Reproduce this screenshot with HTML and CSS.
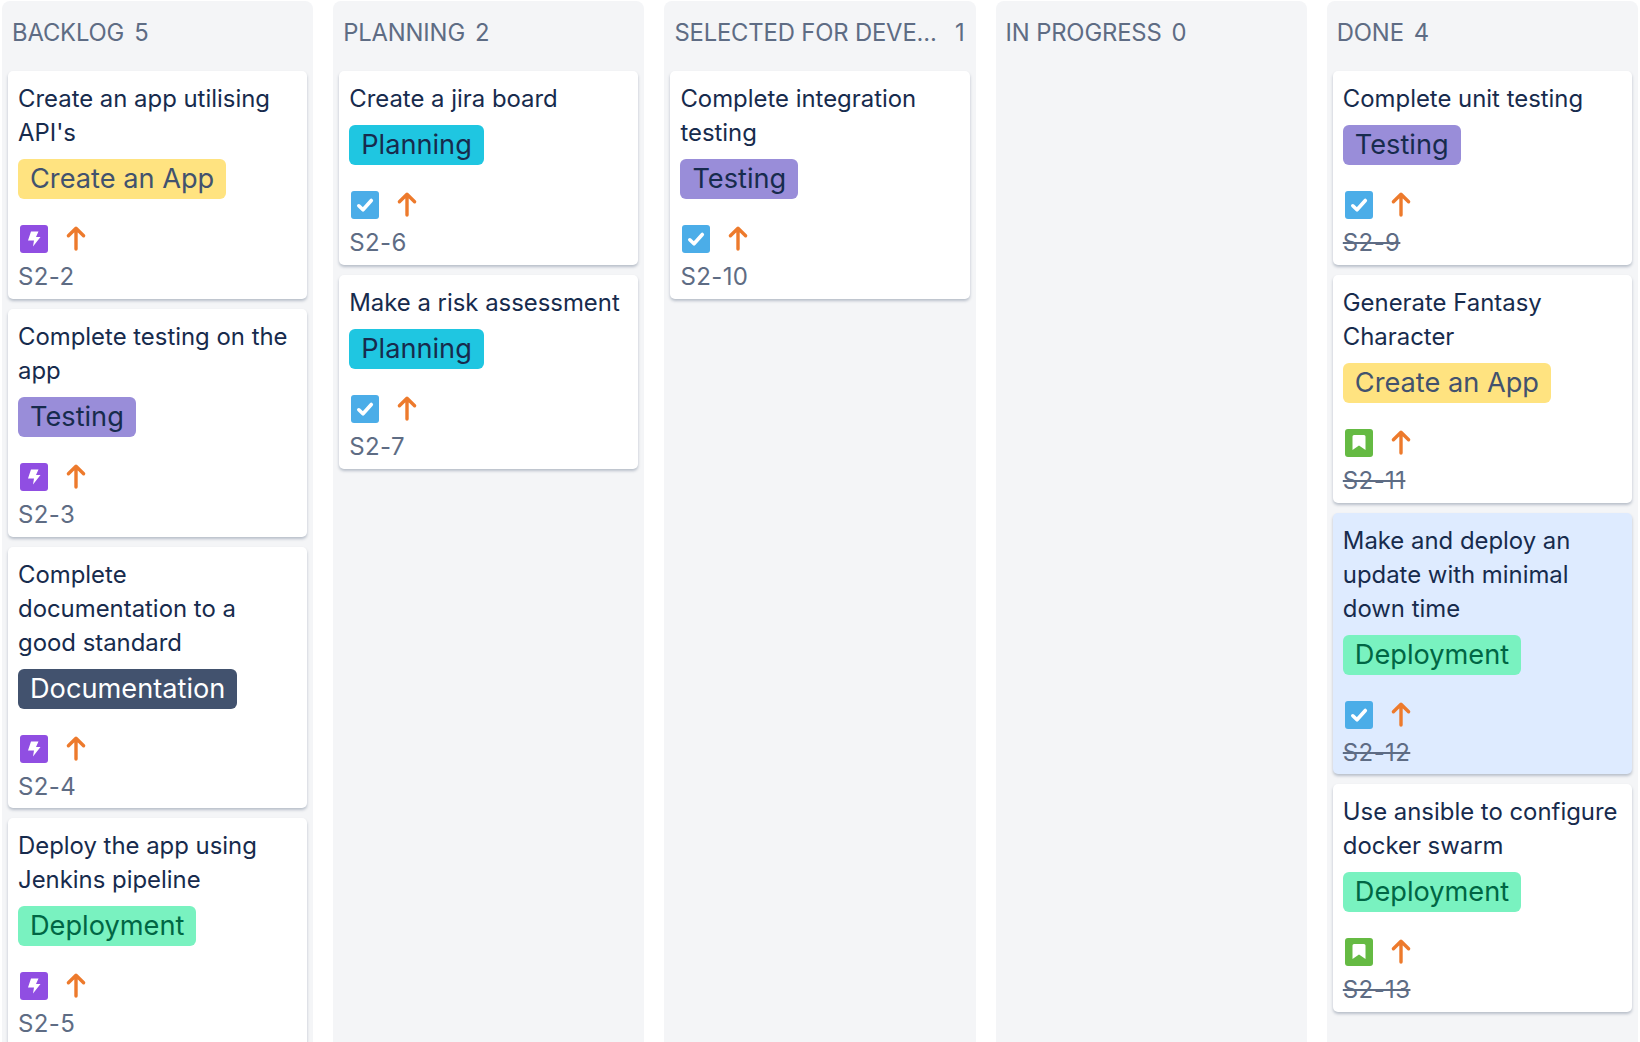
FILE: index.html
```html
<!DOCTYPE html>
<html lang="en">
<head>
    <meta charset="UTF-8">
    <title>Board</title>
    <link rel="stylesheet" href="styles.css">
</head>
<body>
    <svg class="defs" width="0" height="0">
        <symbol id="epic" viewBox="0 0 28 28">
            <rect width="28" height="28" rx="3" fill="#904ee2"/>
            <path d="M11 6.500h7.500L16 12h4.500L13 21.500l1-6H8z" fill="#fff"/>
        </symbol>
        <symbol id="task" viewBox="0 0 28 28">
            <rect width="28" height="28" rx="3" fill="#4bade8"/>
            <path d="M7.800 14.800 12 18.800 20.300 9.500" fill="none" stroke="#fff" stroke-width="3.600" stroke-linecap="round" stroke-linejoin="round"/>
        </symbol>
        <symbol id="story" viewBox="0 0 28 28">
            <rect width="28" height="28" rx="3" fill="#65ba43"/>
            <path d="M7.500 7.500A1.500 1.500 0 0 1 9 6h10a1.500 1.500 0 0 1 1.500 1.500V21L14 16.500 7.500 21z" fill="#fff"/>
        </symbol>
        <symbol id="high" viewBox="0 0 28 28">
            <path d="M14 24V4M6.400 10.800 14 3.300l7.600 7.500" fill="none" stroke="#ed7a2c" stroke-width="3.400" stroke-linecap="round" stroke-linejoin="round"/>
        </symbol>
    </svg>

    <div class="board">
        <section class="column">
            <h2 class="column-head"><span class="column-name">BACKLOG</span><span class="column-count">5</span></h2>
            <article class="card">
                <p class="card-title">Create an app utilising API's</p>
                <span class="tag tag-app">Create an App</span>
                <div class="card-icons"><svg class="icon"><use href="#epic"/></svg><svg class="icon"><use href="#high"/></svg></div>
                <span class="card-key">S2-2</span>
            </article>
            <article class="card">
                <p class="card-title">Complete testing on the app</p>
                <span class="tag tag-testing">Testing</span>
                <div class="card-icons"><svg class="icon"><use href="#epic"/></svg><svg class="icon"><use href="#high"/></svg></div>
                <span class="card-key">S2-3</span>
            </article>
            <article class="card">
                <p class="card-title">Complete documentation to a good standard</p>
                <span class="tag tag-docs">Documentation</span>
                <div class="card-icons"><svg class="icon"><use href="#epic"/></svg><svg class="icon"><use href="#high"/></svg></div>
                <span class="card-key">S2-4</span>
            </article>
            <article class="card">
                <p class="card-title">Deploy the app using Jenkins pipeline</p>
                <span class="tag tag-deploy">Deployment</span>
                <div class="card-icons"><svg class="icon"><use href="#epic"/></svg><svg class="icon"><use href="#high"/></svg></div>
                <span class="card-key">S2-5</span>
            </article>
        </section>

        <section class="column">
            <h2 class="column-head"><span class="column-name">PLANNING</span><span class="column-count">2</span></h2>
            <article class="card">
                <p class="card-title">Create a jira board</p>
                <span class="tag tag-planning">Planning</span>
                <div class="card-icons"><svg class="icon"><use href="#task"/></svg><svg class="icon"><use href="#high"/></svg></div>
                <span class="card-key">S2-6</span>
            </article>
            <article class="card">
                <p class="card-title">Make a risk assessment</p>
                <span class="tag tag-planning">Planning</span>
                <div class="card-icons"><svg class="icon"><use href="#task"/></svg><svg class="icon"><use href="#high"/></svg></div>
                <span class="card-key">S2-7</span>
            </article>
        </section>

        <section class="column">
            <h2 class="column-head"><span class="column-name">SELECTED FOR DEVE...</span><span class="column-count column-count-right">1</span></h2>
            <article class="card">
                <p class="card-title">Complete integration testing</p>
                <span class="tag tag-testing">Testing</span>
                <div class="card-icons"><svg class="icon"><use href="#task"/></svg><svg class="icon"><use href="#high"/></svg></div>
                <span class="card-key">S2-10</span>
            </article>
        </section>

        <section class="column">
            <h2 class="column-head"><span class="column-name">IN PROGRESS</span><span class="column-count">0</span></h2>
        </section>

        <section class="column">
            <h2 class="column-head"><span class="column-name">DONE</span><span class="column-count">4</span></h2>
            <article class="card">
                <p class="card-title">Complete unit testing</p>
                <span class="tag tag-testing">Testing</span>
                <div class="card-icons"><svg class="icon"><use href="#task"/></svg><svg class="icon"><use href="#high"/></svg></div>
                <span class="card-key card-key-done">S2-9</span>
            </article>
            <article class="card">
                <p class="card-title">Generate Fantasy Character</p>
                <span class="tag tag-app">Create an App</span>
                <div class="card-icons"><svg class="icon"><use href="#story"/></svg><svg class="icon"><use href="#high"/></svg></div>
                <span class="card-key card-key-done">S2-11</span>
            </article>
            <article class="card card-selected">
                <p class="card-title">Make and deploy an update with minimal down time</p>
                <span class="tag tag-deploy">Deployment</span>
                <div class="card-icons"><svg class="icon"><use href="#task"/></svg><svg class="icon"><use href="#high"/></svg></div>
                <span class="card-key card-key-done">S2-12</span>
            </article>
            <article class="card">
                <p class="card-title">Use ansible to configure docker swarm</p>
                <span class="tag tag-deploy">Deployment</span>
                <div class="card-icons"><svg class="icon"><use href="#story"/></svg><svg class="icon"><use href="#high"/></svg></div>
                <span class="card-key card-key-done">S2-13</span>
            </article>
        </section>
    </div>
</body>
</html>
```

FILE: styles.css
```css
* { padding: 0; margin: 0; box-sizing: border-box; }

html, body { height: 1042px; overflow: hidden; }
body { background: #ffffff; font-family: "Inter", "Noto Sans", sans-serif; color: #172b4d; }

.defs { position: absolute; }

.board { display: grid; grid-template-columns: repeat(5, 1fr); gap: 20px; height: 1042px; padding: 1px 2px 0; overflow: hidden; }

.column { background: #f4f5f7; border-radius: 8px 8px 0 0; padding: 0 6px; min-width: 0; }

.column-head { display: flex; height: 70px; padding: 15px 5px 0 4px; font-size: 23.8px; line-height: 34px; font-weight: 400; letter-spacing: -0.15px; color: #5e6c84; }
.column-name { white-space: nowrap; }
.column-count { margin-left: 10px; flex: none; }
.column-count-right { margin-left: auto; }

.card { display: block; background: #ffffff; border-radius: 5px; padding: 10px 10px 4.8px; margin-bottom: 10px; box-shadow: 0 2px 3px rgba(9, 30, 66, 0.25); }
.card-selected { background: #deebff; }

.card-title { font-size: 23.9px; line-height: 34px; padding-top: 1px; margin-bottom: 9px; }

.tag { display: inline-block; height: 40px; line-height: 40px; padding: 0 12px; border-radius: 6px; font-size: 27.2px; vertical-align: top; }
.tag-app { background: #ffe380; color: #42526e; }
.tag-testing { background: #998dd9; color: #172b4d; }
.tag-planning { background: #1fc6e1; color: #172b4d; }
.tag-docs { background: #42526e; color: #ffffff; }
.tag-deploy { background: #79f2c0; color: #006644; }

.card-icons { display: flex; gap: 14px; margin: 26px 0 7px 2px; }
.icon { width: 28px; height: 28px; display: block; }

.card-key { display: block; font-size: 24px; line-height: 34px; letter-spacing: 0.4px; color: #5e6c84; }
.card-key-done { text-decoration: line-through; }
```
